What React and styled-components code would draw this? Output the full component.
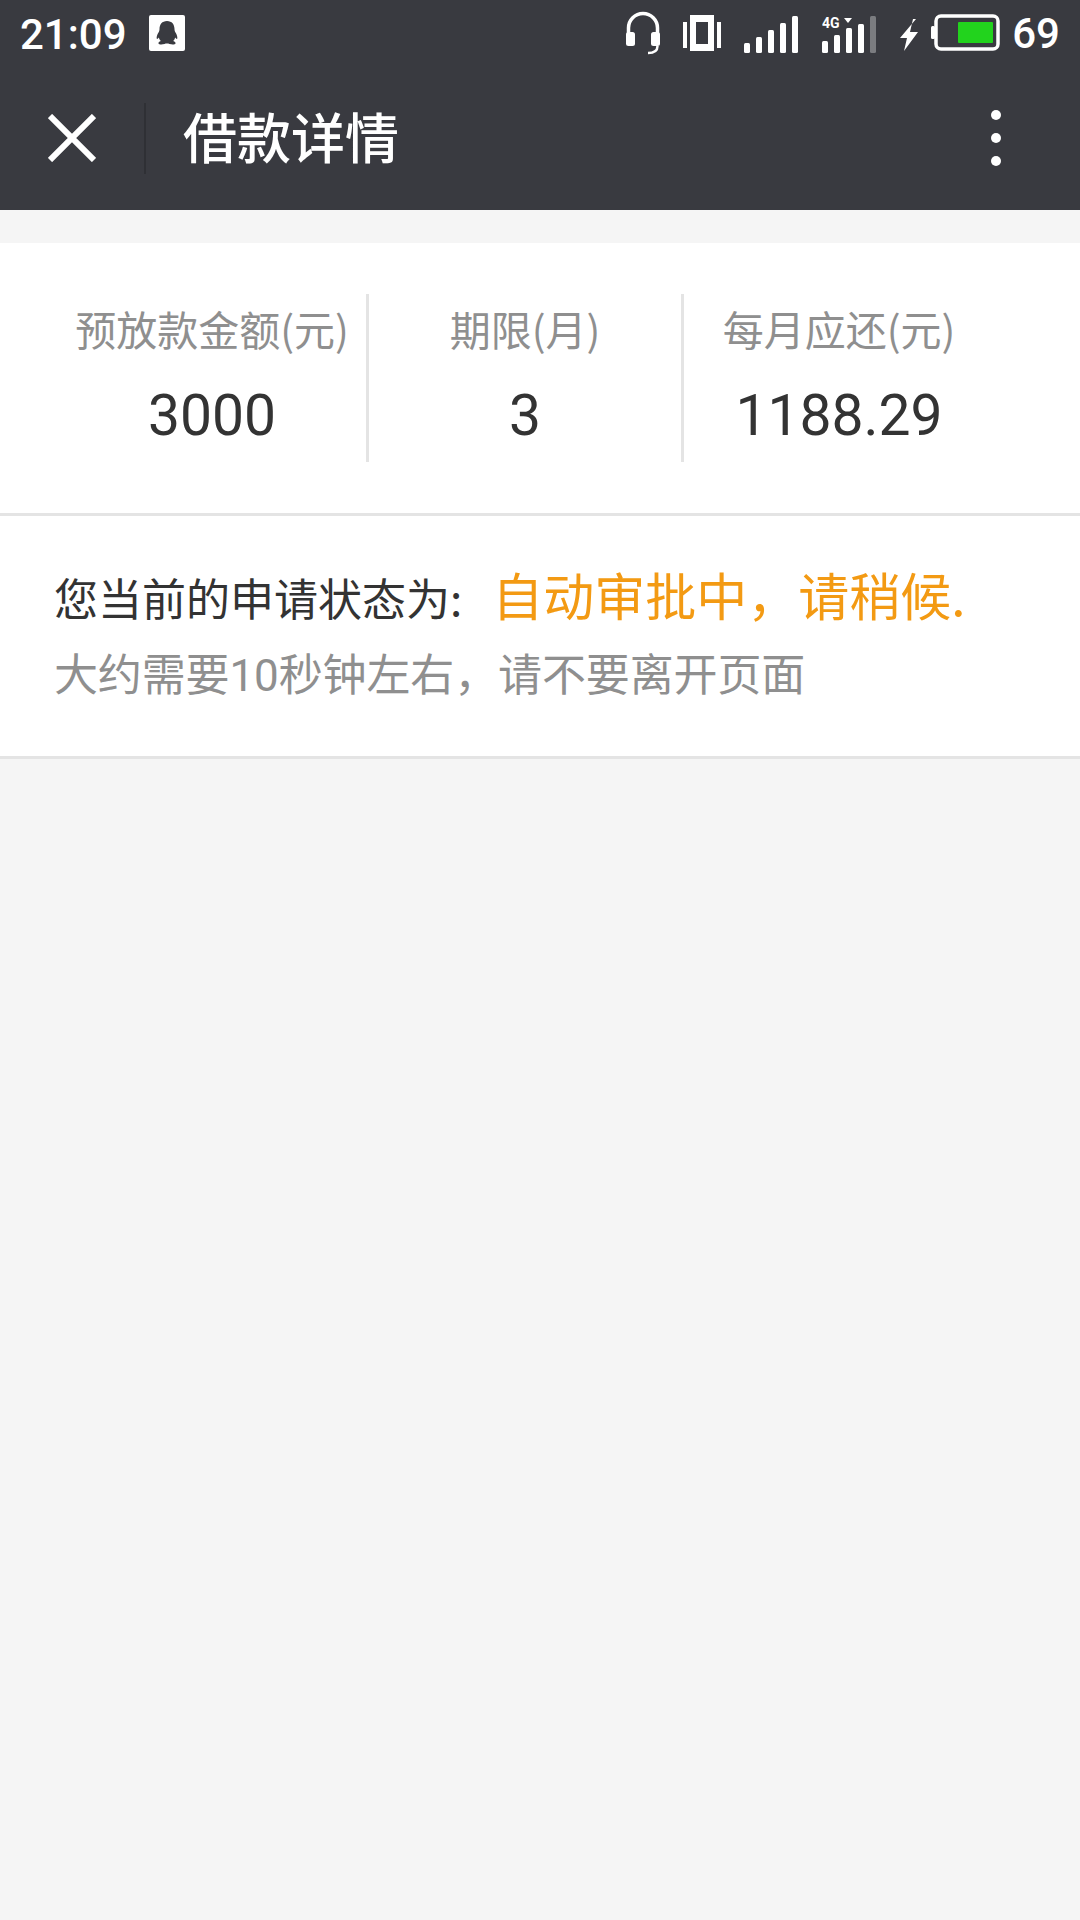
import React from 'react';
import styled, { createGlobalStyle } from 'styled-components';

const GlobalStyle = createGlobalStyle`
html, body {
  margin: 0;
  padding: 0;
  background: #f5f5f5;
}
body {
  font-family: Roboto, "Noto Sans CJK SC", sans-serif;
}
`;

const Page = styled.div`
width: 1080px;
height: 1920px;
background: #f5f5f5;
overflow: hidden;
`;

const Header = styled.header`
background: #393a40;
height: 210px;
color: #fff;
`;

const StatusBar = styled.div`
height: 66px;
display: flex;
align-items: center;
padding: 0 20px 0 20px;
`;

const Time = styled.span`
font-size: 42px;
font-weight: 500;
line-height: 64px;
margin-top: 3px;
`;

const QqBadge = styled.svg`
width: 36px;
height: 36px;
margin-left: 22px;
`;

const StatusIcons = styled.div`
margin-left: auto;
display: flex;
align-items: center;
`;

const StatusIcon = styled.svg`
display: block;
height: 44px;
width: ${p => p.$w}px;
margin-left: ${p => p.$gap}px;
`;

const Battery = styled.span`
font-size: 42px;
font-weight: 500;
line-height: 64px;
margin: 2px 0 0 12px;
`;

const NavBar = styled.div`
height: 144px;
display: flex;
align-items: center;
`;

const CloseButton = styled.svg`
width: 48px;
height: 48px;
margin-left: 48px;
`;

const NavDivider = styled.div`
width: 2px;
height: 71px;
background: #2f3035;
margin-left: 48px;
`;

const Title = styled.h1`
margin: -5px 0 0 37px;
font-size: 54px;
font-weight: 500;
line-height: 70px;
font-family: "Noto Sans CJK SC", sans-serif;
`;

const MoreButton = styled.div`
margin: 0 79px 0 auto;
display: flex;
flex-direction: column;
gap: 13px;
`;

const Dot = styled.span`
width: 10px;
height: 10px;
border-radius: 50%;
background: #fff;
`;

const Summary = styled.section`
margin-top: 33px;
height: 219px;
background: #fff;
border-bottom: 3px solid #e4e4e4;
display: grid;
grid-template-columns: repeat(3, 315px);
padding: 51px 0 0 54px;
`;

const SummaryCell = styled.div`
height: 168px;
display: flex;
flex-direction: column;
align-items: center;
padding: 0 ${p => p.$pr || 0}px 0 ${p => p.$pl || 0}px;
border-right: ${p => (p.$last ? 'none' : '3px solid #e4e4e4')};
box-sizing: border-box;
`;

const SummaryLabel = styled.div`
font-family: "Noto Sans CJK SC", sans-serif;
font-size: 41px;
line-height: 50px;
margin-top: 9px;
color: #8f8f8f;
white-space: nowrap;
`;

const SummaryValue = styled.div`
font-size: 57px;
line-height: 66px;
margin-top: 30px;
color: #333;
`;

const StatusCard = styled.section`
height: 195px;
background: #fff;
border-bottom: 3px solid #e4e4e4;
padding: 45px 0 0 54px;
`;

const StatusLine = styled.div`
display: flex;
align-items: baseline;
font-family: "Noto Sans CJK SC", sans-serif;
font-size: 44px;
line-height: 66px;
color: #333;
white-space: nowrap;
`;

const Highlight = styled.span`
font-size: 51px;
color: #f39a13;
margin-left: 30px;
`;

const HintLine = styled.div`
font-family: Roboto, "Noto Sans CJK SC", sans-serif;
font-size: 44px;
line-height: 60px;
margin-top: 16px;
letter-spacing: -0.13px;
color: #8f8f8f;
white-space: nowrap;
`;

function SignalBars({ bars }) {
  return bars.map(([x, y, w, h, fill], i) => (
    <rect key={i} x={x} y={y} width={w} height={h} rx="1.5" fill={fill || '#fff'} />
  ));
}

export default function App() {
  return (
    <Page>
      <GlobalStyle />
      <Header>
        <StatusBar>
          <Time>21:09</Time>
          <QqBadge viewBox="0 0 36 36">
            <rect width="36" height="36" rx="2" fill="#fff" />
            <path
              d="M18 6c-5 0-7.500 3.600-7.500 8 0 1.400-.3 2.300-1 3.500-1.300 2-2.100 4.500-1.800 6 .3 1 1.300.3 2.100-1 .4 1.400 1 2.500 2 3.400-1.500.6-2.600 1.400-2.300 2.500.4 1.300 3.500 1.300 6 .6.900-.3 1.600-.4 2.500-.4s1.600.1 2.500.4c2.500.7 5.600.7 6-.6.300-1.100-.8-1.900-2.300-2.500 1-.9 1.600-2 2-3.400.8 1.300 1.800 2 2.100 1 .3-1.500-.5-4-1.800-6-.7-1.200-1-2.100-1-3.500 0-4.400-2.500-8-7.500-8z"
              fill="#393a40"
            />
          </QqBadge>
          <StatusIcons>
            <StatusIcon $w={36} $gap={0} viewBox="0 0 36 44" fill="none">
              <path d="M3.500 24v-7a14.500 14.500 0 0 1 29 0v7" stroke="#fff" strokeWidth="3.500" />
              <rect x="1" y="21" width="9" height="14" rx="2.500" fill="#fff" />
              <rect x="26" y="21" width="9" height="14" rx="2.500" fill="#fff" />
              <path d="M32.500 35c0 5-4 7-9.500 7" stroke="#fff" strokeWidth="2.500" />
            </StatusIcon>
            <StatusIcon $w={38} $gap={22} viewBox="0 0 38 44" fill="none">
              <rect x="0" y="11" width="4" height="26" fill="#fff" />
              <rect x="34" y="11" width="4" height="26" fill="#fff" />
              <rect x="7" y="4" width="24" height="36" fill="#fff" />
              <rect x="13" y="11" width="12" height="22" fill="#393a40" />
            </StatusIcon>
            <StatusIcon $w={55} $gap={23} viewBox="0 0 55 44">
              <SignalBars
                bars={[
                  [0, 32, 6, 10],
                  [12, 26, 6, 16],
                  [24, 19, 6, 23],
                  [36, 12, 6, 30],
                  [48, 5, 6, 37],
                ]}
              />
            </StatusIcon>
            <StatusIcon $w={55} $gap={23} viewBox="0 0 55 44">
              <text x="0" y="17" fontFamily="Roboto, sans-serif" fontWeight="700" fontSize="14" fill="#fff">4G</text>
              <path d="M22 7h8l-4 5z" fill="#fff" />
              <SignalBars
                bars={[
                  [0, 30, 6, 12],
                  [12, 24, 6, 18],
                  [24, 17, 6, 25],
                  [36, 13, 6, 29],
                  [48, 5, 6, 37, '#7b7c80'],
                ]}
              />
            </StatusIcon>
            <StatusIcon $w={20} $gap={22} viewBox="0 0 20 44">
              <path d="M17 8L1 27h7l-3 13 14-19h-8l3-13z" fill="#fff" />
            </StatusIcon>
            <StatusIcon $w={69} $gap={12} viewBox="0 0 69 44" fill="none">
              <rect x="5" y="5" width="62" height="33" rx="5" stroke="#fff" strokeWidth="3.500" />
              <rect x="0" y="15" width="4" height="13" rx="1.500" fill="#fff" />
              <rect x="27" y="11" width="35" height="21" rx="1" fill="#22d31d" />
            </StatusIcon>
            <Battery>69</Battery>
          </StatusIcons>
        </StatusBar>
        <NavBar>
          <CloseButton viewBox="0 0 48 48" fill="none">
            <path d="M2 2l44 44M46 2L2 46" stroke="#fff" strokeWidth="6" />
          </CloseButton>
          <NavDivider />
          <Title>借款详情</Title>
          <MoreButton>
            <Dot />
            <Dot />
            <Dot />
          </MoreButton>
        </NavBar>
      </Header>

      <Summary>
        <SummaryCell $pl={4}>
          <SummaryLabel>预放款金额(元)</SummaryLabel>
          <SummaryValue>3000</SummaryValue>
        </SummaryCell>
        <SummaryCell>
          <SummaryLabel>期限(月)</SummaryLabel>
          <SummaryValue>3</SummaryValue>
        </SummaryCell>
        <SummaryCell $last $pr={5}>
          <SummaryLabel>每月应还(元)</SummaryLabel>
          <SummaryValue>1188.29</SummaryValue>
        </SummaryCell>
      </Summary>

      <StatusCard>
        <StatusLine>
          您当前的申请状态为:
          <Highlight>自动审批中，请稍候.</Highlight>
        </StatusLine>
        <HintLine>大约需要10秒钟左右，请不要离开页面</HintLine>
      </StatusCard>
    </Page>
  );
}
